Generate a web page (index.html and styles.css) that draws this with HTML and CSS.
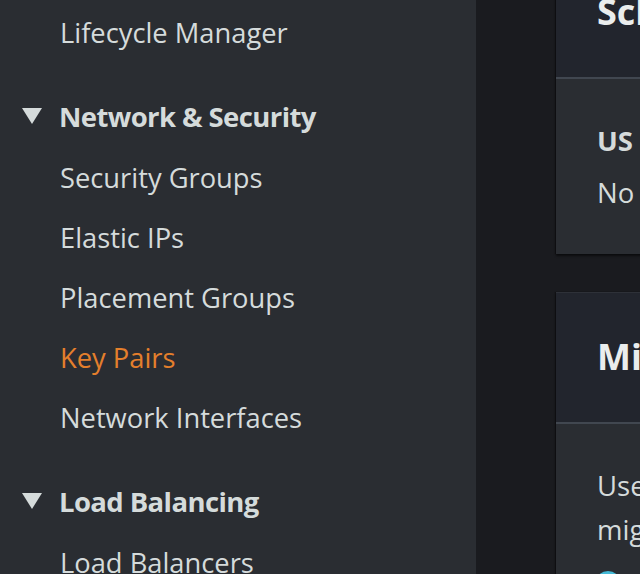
FILE: index.html
```
<!DOCTYPE html>
<html lang="en">
<head>
<meta charset="utf-8">
<title>EC2 Console</title>
<link rel="stylesheet" href="styles.css">
</head>
<body>
<div class="layout">
  <nav class="sidebar">
    <ul class="nav-list">
      <li class="nav-item">Lifecycle Manager</li>
    </ul>
    <section class="nav-section">
      <div class="nav-heading">
        <svg class="caret" width="20" height="16" viewBox="0 0 20 16"><polygon points="0,0 20,0 10,16" fill="currentColor"/></svg>
        <span>Network &amp; Security</span>
      </div>
      <ul class="nav-list">
        <li class="nav-item">Security Groups</li>
        <li class="nav-item">Elastic IPs</li>
        <li class="nav-item">Placement Groups</li>
        <li class="nav-item active">Key Pairs</li>
        <li class="nav-item">Network Interfaces</li>
      </ul>
    </section>
    <section class="nav-section">
      <div class="nav-heading">
        <svg class="caret" width="20" height="16" viewBox="0 0 20 16"><polygon points="0,0 20,0 10,16" fill="currentColor"/></svg>
        <span>Load Balancing</span>
      </div>
      <ul class="nav-list">
        <li class="nav-item">Load Balancers</li>
        <li class="nav-item">Target Groups</li>
      </ul>
    </section>
  </nav>
  <main class="main">
    <div class="cards">
      <div class="card first">
        <div class="card-header"><h2>Scheduled events</h2></div>
        <div class="card-body">
          <div class="label">US East (N. Virginia)</div>
          <div class="value">No scheduled events</div>
        </div>
      </div>
      <div class="card">
        <div class="card-header"><h2>Migrate a server</h2></div>
        <div class="card-body">
          <div class="line">Use AWS Application Migration Service to simplify and expedite your</div>
          <div class="line">migration to AWS.</div>
          <div class="line link-line"><svg class="info" width="26" height="26" viewBox="0 0 26 26"><circle cx="13" cy="13" r="13" fill="#44b9d6"/></svg><span>Learn more</span></div>
        </div>
      </div>
    </div>
  </main>
</div>
</body>
</html>
```
FILE: styles.css
```
html, body {
  margin: 0;
  padding: 0;
  width: 640px;
  height: 574px;
  overflow: hidden;
  background: #1a1b1f;
  font-family: "Open Sans", "Noto Sans", sans-serif;
  color: #d5dbdb;
}

.layout {
  display: flex;
  height: 574px;
}

.sidebar {
  flex: 0 0 476px;
  background: #2a2d32;
  padding-top: 3px;
  box-sizing: border-box;
}

.nav-list {
  list-style: none;
  margin: 0;
  padding: 0;
}

.nav-item {
  height: 60px;
  line-height: 60px;
  padding-left: 60px;
  font-size: 27.3px;
  white-space: nowrap;
}

.nav-item.active {
  color: #e47f2c;
}

.nav-section {
  margin-top: 23px;
}

.nav-heading {
  display: flex;
  align-items: center;
  height: 60px;
  margin-bottom: 2px;
  padding-left: 22px;
  font-size: 27.5px;
  font-weight: 700;
  letter-spacing: -0.6px;
  white-space: nowrap;
}

.caret {
  margin-right: 17px;
  color: #d5dbdb;
}

.main {
  flex: 1;
  min-width: 0;
  padding-left: 80px;
  overflow: hidden;
}

.cards {
  width: 1000px;
  margin-top: -53px;
  display: flex;
  flex-direction: column;
  gap: 38px;
}

.card {
  background: #2a2d32;
  box-shadow: 0 2px 2px rgba(0, 0, 0, 0.55), -1px 0 1px rgba(0, 0, 0, 0.3);
  border-top: 1px solid #2e3138;
}

.card-header {
  background: #22252d;
  padding: 38px 41px 39px;
  border-bottom: 2px solid #414750;
}

.card-header h2 {
  margin: 0;
  font-size: 36px;
  line-height: 52px;
  font-weight: 700;
  color: #eaeded;
  white-space: nowrap;
}

.card-body {
  padding: 40px 41px 39px;
  font-size: 27.5px;
  line-height: 44px;
  white-space: nowrap;
}

.label {
  font-weight: 700;
}

.value {
  margin-top: 8px;
}

.link-line {
  display: flex;
  align-items: center;
  gap: 10px;
  margin-top: 10px;
  margin-left: -2px;
}
```
